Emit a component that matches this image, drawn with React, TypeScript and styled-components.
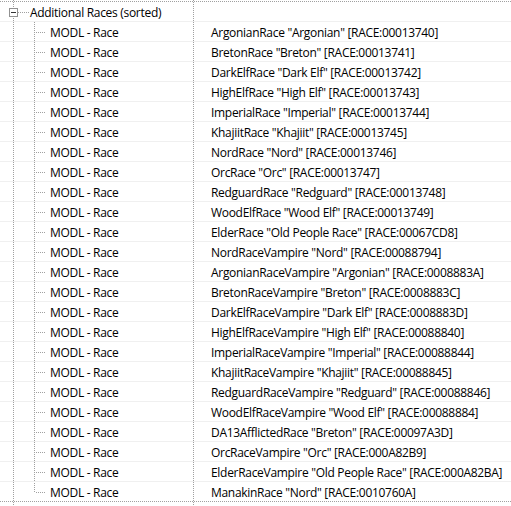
import styled, { createGlobalStyle } from 'styled-components';

const GlobalStyle = createGlobalStyle`
  html, body {
    margin: 0;
    padding: 0;
    background: #ffffff;
  }
  body {
    font-family: 'Segoe UI', 'Open Sans', 'Noto Sans', sans-serif;
    font-size: 12px;
    letter-spacing: -0.3px;
    color: #000000;
  }
`;

const DOT = '#a0a0a0';

// whole tree area; the two long dotted verticals (root guide + column split) run past the rows
const StyledTreeView = styled.div`
  height: 100vh;
  padding-top: 1px;
  box-sizing: border-box;
  overflow: hidden;
  background:
    linear-gradient(${DOT} 50%, transparent 50%) 13px 0 / 1px 2px repeat-y,
    linear-gradient(${DOT} 50%, transparent 50%) 193px 0 / 1px 2px repeat-y,
    #ffffff;
`;

const StyledRows = styled.div`
  border-top: 1px dotted ${DOT};
`;

interface StyledRowProps {
  last?: boolean;
}

const StyledRow = styled.div<StyledRowProps>`
  display: grid;
  grid-template-columns: 193px 1fr;
  height: 20px;
  box-sizing: border-box;
  border-bottom: 1px solid #f0f0f0;
  ${({ last }) =>
    last &&
    `
    border-bottom: 1px dotted ${DOT};
  `}
`;

const StyledNameCell = styled.div`
  display: flex;
  align-items: center;
  height: 19px;
  white-space: nowrap;
`;

const StyledValueCell = styled.div`
  display: flex;
  align-items: center;
  height: 19px;
  padding-left: 18px;
  white-space: nowrap;
`;

const StyledGuide = styled.svg`
  flex: none;
  display: block;
`;

const StyledLabel = styled.span`
  line-height: 19px;
  padding-top: 2px;
`;

const races: string[] = [
  'ArgonianRace "Argonian" [RACE:00013740]',
  'BretonRace "Breton" [RACE:00013741]',
  'DarkElfRace "Dark Elf" [RACE:00013742]',
  'HighElfRace "High Elf" [RACE:00013743]',
  'ImperialRace "Imperial" [RACE:00013744]',
  'KhajiitRace "Khajiit" [RACE:00013745]',
  'NordRace "Nord" [RACE:00013746]',
  'OrcRace "Orc" [RACE:00013747]',
  'RedguardRace "Redguard" [RACE:00013748]',
  'WoodElfRace "Wood Elf" [RACE:00013749]',
  'ElderRace "Old People Race" [RACE:00067CD8]',
  'NordRaceVampire "Nord" [RACE:00088794]',
  'ArgonianRaceVampire "Argonian" [RACE:0008883A]',
  'BretonRaceVampire "Breton" [RACE:0008883C]',
  'DarkElfRaceVampire "Dark Elf" [RACE:0008883D]',
  'HighElfRaceVampire "High Elf" [RACE:00088840]',
  'ImperialRaceVampire "Imperial" [RACE:00088844]',
  'KhajiitRaceVampire "Khajiit" [RACE:00088845]',
  'RedguardRaceVampire "Redguard" [RACE:00088846]',
  'WoodElfRaceVampire "Wood Elf" [RACE:00088884]',
  'DA13AfflictedRace "Breton" [RACE:00097A3D]',
  'OrcRaceVampire "Orc" [RACE:000A82B9]',
  'ElderRaceVampire "Old People Race" [RACE:000A82BA]',
  'ManakinRace "Nord" [RACE:0010760A]',
];

// expand box with minus + branch to the label
const RootGuide = () => (
  <StyledGuide width={30} height={19} viewBox="0 0 30 19">
    <rect x={9.5} y={6.5} width={8} height={8} fill="#fff" stroke="#919191" />
    <line x1={11} y1={10.5} x2={16} y2={10.5} stroke="#333" />
    <line x1={18} y1={10.5} x2={29} y2={10.5} stroke={DOT} strokeDasharray="1 1" />
  </StyledGuide>
);

const ChildGuide = ({ last }: { last: boolean }) => (
  <StyledGuide width={50} height={19} viewBox="0 0 50 19">
    <line
      x1={34.5}
      y1={last ? 1 : 0}
      x2={34.5}
      y2={last ? 11 : 19}
      stroke={DOT}
      strokeDasharray="1 1"
    />
    <line x1={36} y1={10.5} x2={46} y2={10.5} stroke={DOT} strokeDasharray="1 1" />
  </StyledGuide>
);

export default function App() {
  return (
    <>
      <GlobalStyle />
      <StyledTreeView>
        <StyledRows>
          <StyledRow>
            <StyledNameCell>
              <RootGuide />
              <StyledLabel>Additional Races (sorted)</StyledLabel>
            </StyledNameCell>
            <StyledValueCell />
          </StyledRow>
          {races.map((race, i) => {
            const last = i === races.length - 1;
            return (
              <StyledRow key={race} last={last}>
                <StyledNameCell>
                  <ChildGuide last={last} />
                  <StyledLabel>MODL - Race</StyledLabel>
                </StyledNameCell>
                <StyledValueCell>
                  <StyledLabel>{race}</StyledLabel>
                </StyledValueCell>
              </StyledRow>
            );
          })}
        </StyledRows>
      </StyledTreeView>
    </>
  );
}
